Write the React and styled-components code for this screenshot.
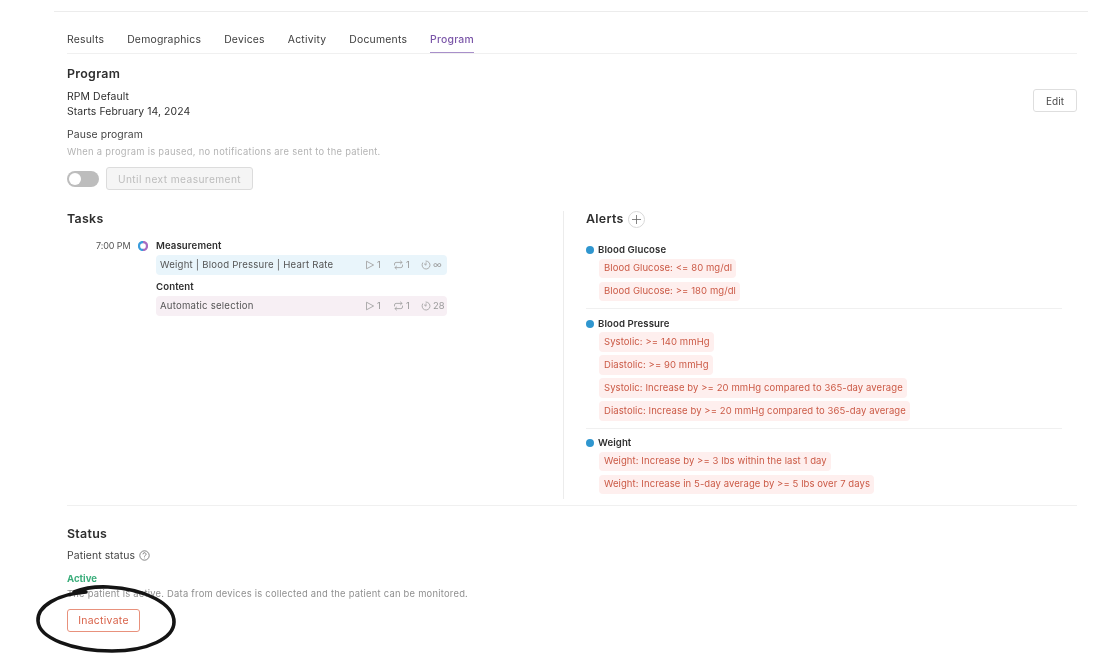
import React from "react";
import styled, { createGlobalStyle } from "styled-components";

const Global = createGlobalStyle`
  html, body { margin: 0; padding: 0; background: #fff; }
  body { font-family: "Inter", "Noto Sans", sans-serif; color: #2b2b2b; font-size: 10px; }
  * { box-sizing: border-box; }
`;

const Page = styled.div`
  position: relative;
  width: 1099px;
  height: 661px;
  overflow: hidden;
  padding: 11px 11px 0 54px;
  filter: blur(0.3px);
`;
const TopRule = styled.div`height: 1px; background: #ececec;`;
const Main = styled.div`padding: 0 11px 0 13px;`;
const Tabs = styled.nav`
  display: flex;
  gap: 23px;
  height: 42px;
  padding-top: 19px;
  border-bottom: 1px solid #f0f0f0;
`;
const Tab = styled.div`
  height: 22px;
  line-height: 17px;
  font-size: 10.4px;
  letter-spacing: 0.21px;
  white-space: nowrap;
  color: ${p => (p.$active ? "#7a55a8" : "#3d3d3d")};
  font-weight: ${p => (p.$active ? 500 : 400)};
  border-bottom: ${p => (p.$active ? "1px solid #a88fca" : "none")};
`;
const H2 = styled.h2`
  margin: 0;
  font-size: 12.4px;
  line-height: 16px;
  font-weight: 600;
  letter-spacing: 0.3px;
  color: #2e2e2e;
`;
const ProgramSection = styled.section`
  display: flex;
  justify-content: space-between;
  align-items: flex-start;
  padding-top: 12px;
  height: 157px;
`;
const ProgramInfo = styled.div`display: flex; flex-direction: column;`;
const Line = styled.div`
  font-size: 10.4px;
  line-height: 15px;
  letter-spacing: 0.1px;
  color: #2e2e2e;
`;
const Lines = styled.div`margin-top: 7px;`;
const PauseLabel = styled(Line)`margin-top: 8px; color: #444;`;
const Hint = styled.div`
  font-size: 9.4px;
  line-height: 13px;
  letter-spacing: 0.28px;
  margin-top: 3px;
  color: #b4b4b4;
  white-space: nowrap;
`;
const PauseRow = styled.div`
  display: flex;
  align-items: center;
  gap: 7px;
  margin-top: 9px;
`;
const Toggle = styled.div`
  width: 32px;
  height: 16px;
  border-radius: 8px;
  background: #bdbdbd;
  padding: 2px;
`;
const Knob = styled.div`
  width: 12px;
  height: 12px;
  border-radius: 50%;
  background: #fff;
`;
const DisabledButton = styled.div`
  width: 147px;
  height: 23px;
  border: 1px solid #dcdcdc;
  border-radius: 3px;
  background: #f5f5f5;
  color: #bcbcbc;
  font-size: 10.2px;
  letter-spacing: 0.4px;
  display: flex;
  align-items: center;
  justify-content: center;
  white-space: nowrap;
`;
const EditButton = styled.div`
  width: 44px;
  height: 23px;
  margin-top: 23px;
  border: 1px solid #dedede;
  border-radius: 3px;
  color: #4a4a4a;
  font-size: 10px;
  display: flex;
  align-items: center;
  justify-content: center;
`;
const Columns = styled.div`
  display: grid;
  grid-template-columns: 497px 1fr;
  height: 295px;
  border-bottom: 1px solid #f0f0f0;
`;
const TasksColumn = styled.div`
  border-right: 1px solid #ececec;
  height: 288px;
`;
const AlertsColumn = styled.div`padding: 0 15px 0 22px;`;
const TaskGrid = styled.div`
  display: grid;
  grid-template-columns: 29px 35px 25px 291px;
  margin-top: 12px;
`;
const Time = styled.div`
  grid-column: 2;
  font-size: 9px;
  line-height: 14px;
  text-align: left;
  color: #555;
  white-space: nowrap;
  letter-spacing: -0.1px;
`;
const Ring = styled.svg`
  grid-column: 3;
  width: 10px;
  height: 10px;
  margin: 2px 0 0 7px;
`;
const TaskBody = styled.div`grid-column: 4;`;
const TaskTitle = styled.div`
  font-size: 9.6px;
  line-height: 14px;
  font-weight: 600;
  letter-spacing: 0.12px;
  color: #2e2e2e;
  margin-top: ${p => (p.$gap ? "5px" : "0")};
`;
const TaskBar = styled.div`
  height: 20px;
  margin-top: 2px;
  border-radius: 4px;
  background: ${p => p.$bg};
  display: flex;
  align-items: center;
  padding: 0 0 1px 4px;
  font-size: 9.6px;
  letter-spacing: 0.22px;
  color: #555;
`;
const TaskName = styled.span`flex: 1; white-space: nowrap;`;
const Metric = styled.span`
  display: flex;
  align-items: center;
  gap: 2px;
  width: ${p => p.$w}px;
  color: #999;
  font-size: 9.4px;
  line-height: 1;
  letter-spacing: 0;
  svg { display: block; }
`;
const AlertsHeader = styled.div`
  display: flex;
  align-items: center;
  gap: 4px;
  height: 16px;
`;
const AddButton = styled.div`
  width: 17px;
  height: 17px;
  border-radius: 50%;
  border: 1px solid #d8d8d8;
  display: flex;
  align-items: center;
  justify-content: center;
  color: #666;
`;
const AlertGroup = styled.div`
  padding-bottom: ${p => (p.$last ? "0" : "7px")};
  margin-bottom: ${p => (p.$last ? "0" : "7.5px")};
  border-bottom: ${p => (p.$last ? "none" : "1px solid #f0f0f0")};
`;
const AlertGroups = styled.div`margin-top: 16px;`;
const AlertName = styled.div`
  display: flex;
  align-items: center;
  gap: 4px;
  font-size: 9.6px;
  line-height: 14px;
  font-weight: 600;
  letter-spacing: 0.1px;
  color: #2e2e2e;
`;
const Dot = styled.span`
  width: 8px;
  height: 8px;
  border-radius: 50%;
  background: #2f96cf;
`;
const Chips = styled.div`
  display: flex;
  flex-direction: column;
  align-items: flex-start;
  gap: 3.500px;
  padding: 1.500px 0 0 13px;
`;
const Chip = styled.div`
  height: 19.500px;
  padding: 0 4px 1px 5px;
  display: flex;
  align-items: center;
  border-radius: 4px;
  background: #feefee;
  color: #cb5a46;
  font-size: 9.5px;
  letter-spacing: 0.08px;
  white-space: nowrap;
`;
const StatusSection = styled.section`padding-top: 20px;`;
const StatusLabel = styled(Line)`
  display: flex;
  align-items: center;
  gap: 4px;
  margin-top: 6px;
  color: #444;
`;
const ActiveText = styled.div`
  margin-top: 9px;
  font-size: 9.6px;
  line-height: 14px;
  font-weight: 700;
  color: #3cae7c;
`;
const StatusHint = styled(Hint)`margin-top: 1px; color: #8f8f8f; letter-spacing: 0.24px;`;
const DangerButton = styled.div`
  width: 73px;
  height: 23px;
  margin-top: 9px;
  border: 1.5px solid #e8917c;
  border-radius: 3px;
  color: #d9634a;
  font-size: 10.4px;
  letter-spacing: 0.3px;
  display: flex;
  align-items: center;
  justify-content: center;
`;
const Scribble = styled.svg`
  position: absolute;
  left: 34px;
  top: 584px;
  width: 144px;
  height: 72px;
  pointer-events: none;
`;

const PlayIcon = () => (
  <svg width="10" height="10" viewBox="0 0 10 10" fill="none" stroke="#a5a5a5" strokeWidth="0.9">
    <path d="M1.5 1.2 L8.6 5 L1.5 8.8 Z" strokeLinejoin="round" />
  </svg>
);
const RepeatIcon = () => (
  <svg width="11" height="10" viewBox="0 0 11 10" fill="none" stroke="#a5a5a5" strokeWidth="0.9" strokeLinecap="round" strokeLinejoin="round">
    <path d="M1.500 5 V4 a1.6 1.6 0 0 1 1.6-1.6 H9 M7.500 1 L9 2.400 L7.500 3.800" />
    <path d="M9.500 5 V6 a1.6 1.6 0 0 1-1.6 1.6 H2 M3.500 9 L2 7.600 L3.500 6.200" />
  </svg>
);
const TimerIcon = () => (
  <svg width="10" height="10" viewBox="0 0 10 10" fill="none" stroke="#a5a5a5" strokeWidth="0.9" strokeLinecap="round">
    <path d="M5 1 A4 4 0 1 1 1.6 2.9 M5 2.8 V5.2 L3.4 4" />
  </svg>
);

const Metrics = ({ value }) => (
  <>
    <Metric $w={28}><PlayIcon />1</Metric>
    <Metric $w={28}><RepeatIcon />1</Metric>
    <Metric $w={26}><TimerIcon />{value}</Metric>
  </>
);

const alerts = [
  { name: "Blood Glucose", items: ["Blood Glucose: <= 80 mg/dl", "Blood Glucose: >= 180 mg/dl"] },
  {
    name: "Blood Pressure",
    items: [
      "Systolic: >= 140 mmHg",
      "Diastolic: >= 90 mmHg",
      "Systolic: Increase by >= 20 mmHg compared to 365-day average",
      "Diastolic: Increase by >= 20 mmHg compared to 365-day average",
    ],
  },
  {
    name: "Weight",
    items: ["Weight: Increase by >= 3 lbs within the last 1 day", "Weight: Increase in 5-day average by >= 5 lbs over 7 days"],
  },
];

const tabs = ["Results", "Demographics", "Devices", "Activity", "Documents", "Program"];

export default function App() {
  return (
    <Page>
      <Global />
      <TopRule />
      <Main>
        <Tabs>
          {tabs.map(t => (
            <Tab key={t} $active={t === "Program"}>{t}</Tab>
          ))}
        </Tabs>
        <ProgramSection>
          <ProgramInfo>
            <H2>Program</H2>
            <Lines>
              <Line>RPM Default</Line>
              <Line>Starts February 14, 2024</Line>
            </Lines>
            <PauseLabel>Pause program</PauseLabel>
            <Hint>When a program is paused, no notifications are sent to the patient.</Hint>
            <PauseRow>
              <Toggle><Knob /></Toggle>
              <DisabledButton>Until next measurement</DisabledButton>
            </PauseRow>
          </ProgramInfo>
          <EditButton>Edit</EditButton>
        </ProgramSection>
        <Columns>
          <TasksColumn>
            <H2>Tasks</H2>
            <TaskGrid>
              <Time>7:00 PM</Time>
              <Ring viewBox="0 0 10 10" fill="none" strokeWidth="2.300">
                <path d="M5 1 A4 4 0 0 1 5 9" stroke="#a86cc0" />
                <path d="M5 9 A4 4 0 0 1 5 1" stroke="#3a9cdc" />
              </Ring>
              <TaskBody>
                <TaskTitle>Measurement</TaskTitle>
                <TaskBar $bg="#e9f5fb">
                  <TaskName>Weight | Blood Pressure | Heart Rate</TaskName>
                  <Metrics value="∞" />
                </TaskBar>
                <TaskTitle $gap>Content</TaskTitle>
                <TaskBar $bg="#f7eff4">
                  <TaskName>Automatic selection</TaskName>
                  <Metrics value="28" />
                </TaskBar>
              </TaskBody>
            </TaskGrid>
          </TasksColumn>
          <AlertsColumn>
            <AlertsHeader>
              <H2>Alerts</H2>
              <AddButton>
                <svg width="9" height="9" viewBox="0 0 9 9" stroke="#666" strokeWidth="0.8"><path d="M4.5 0 V9 M0 4.5 H9" /></svg>
              </AddButton>
            </AlertsHeader>
            <AlertGroups>
              {alerts.map((g, i) => (
                <AlertGroup key={g.name} $last={i === alerts.length - 1}>
                  <AlertName><Dot />{g.name}</AlertName>
                  <Chips>
                    {g.items.map(c => <Chip key={c}>{c}</Chip>)}
                  </Chips>
                </AlertGroup>
              ))}
            </AlertGroups>
          </AlertsColumn>
        </Columns>
        <StatusSection>
          <H2>Status</H2>
          <StatusLabel>
            Patient status
            <svg width="11" height="11" viewBox="0 0 11 11" fill="none" stroke="#666" strokeWidth="0.8">
              <circle cx="5.5" cy="5.5" r="4.7" />
              <path d="M4 4.3 a1.5 1.5 0 1 1 2.3 1.2 c-.5.3-.8.6-.8 1.1 M5.5 7.7 v.6" />
            </svg>
          </StatusLabel>
          <ActiveText>Active</ActiveText>
          <StatusHint>The patient is active. Data from devices is collected and the patient can be monitored.</StatusHint>
          <DangerButton>Inactivate</DangerButton>
        </StatusSection>
      </Main>
      <Scribble viewBox="0 0 144 72" fill="none" stroke="#141414" strokeWidth="3.6" strokeLinecap="round">
        <path d="M52 8 C24 10 3 22 4 37 C5 54 38 67 78 67 C114 67 140 54 140 38 C140 20 112 5 74 3 C62 2.500 50 4 40 8" />
      </Scribble>
    </Page>
  );
}
